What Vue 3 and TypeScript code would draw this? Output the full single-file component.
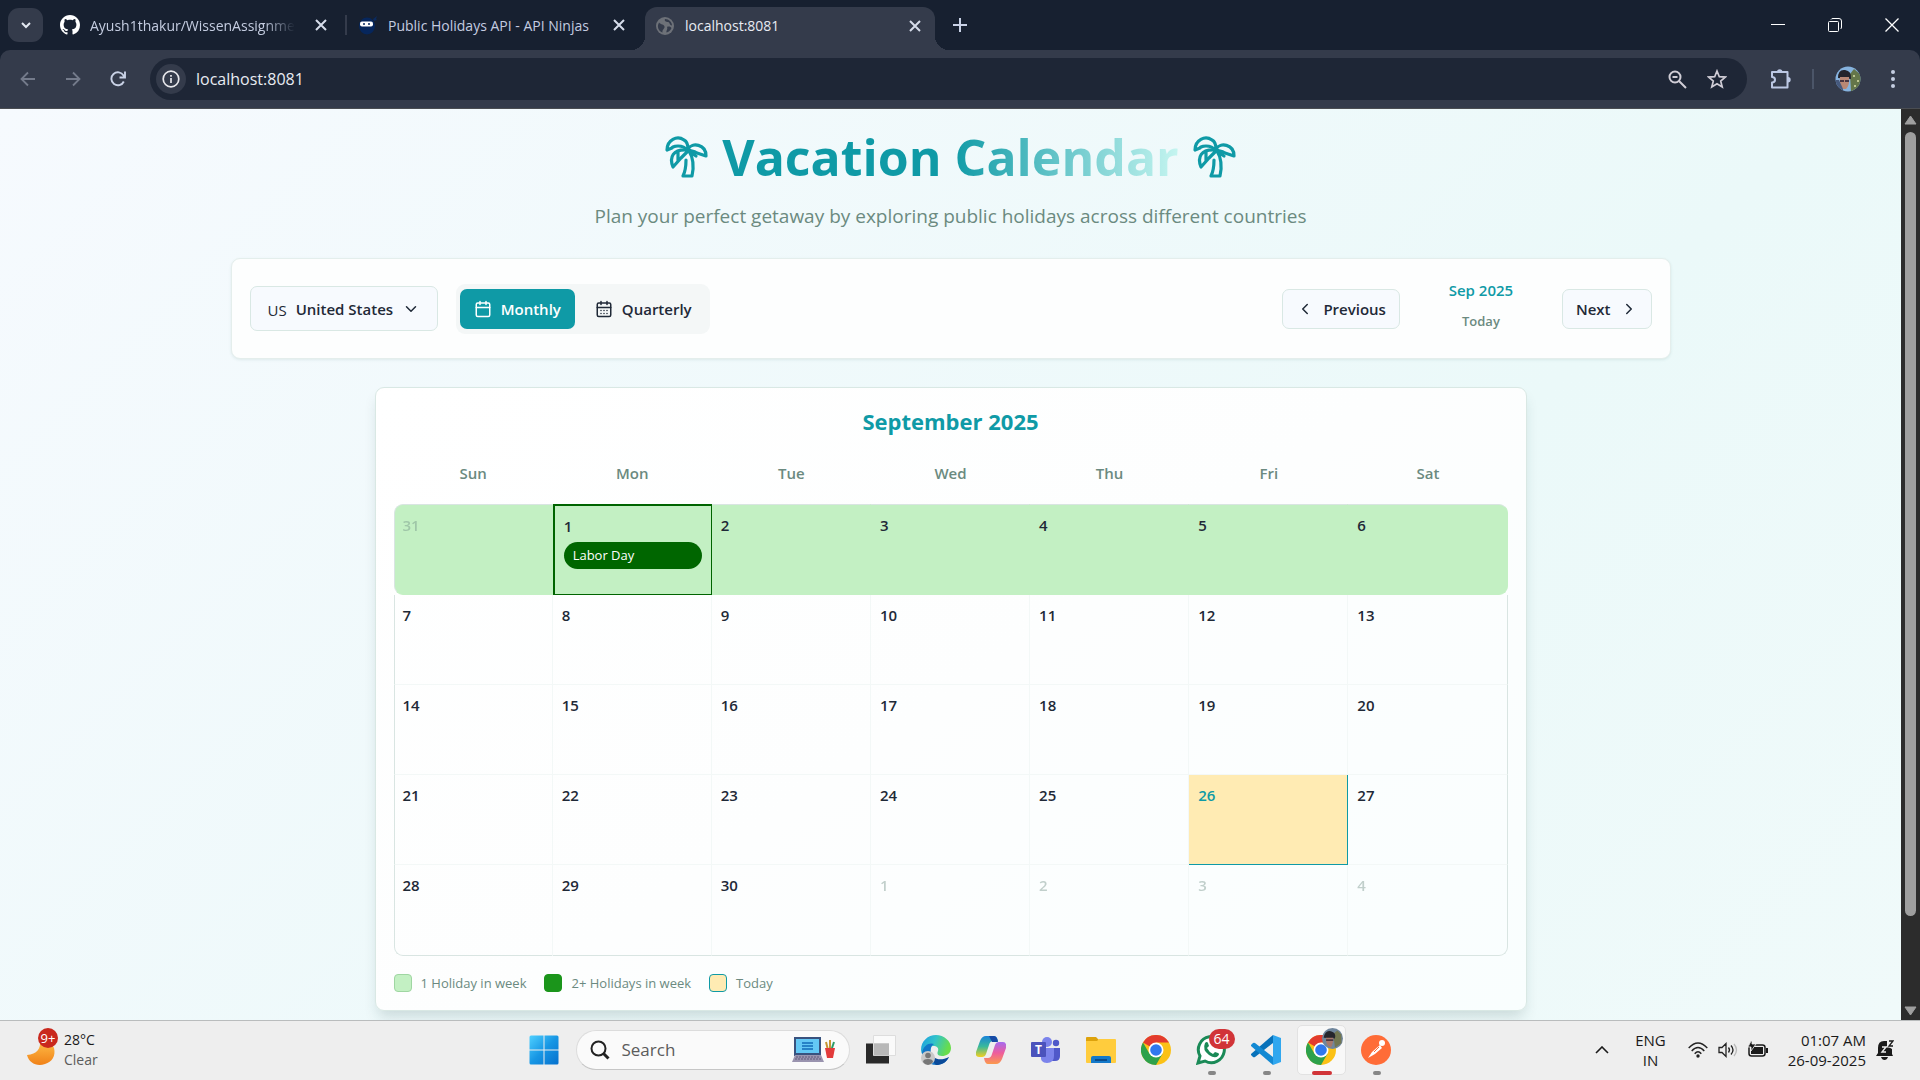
<script setup lang="ts">
interface Day {
  n: number
  muted?: boolean
  today?: boolean
  holiday?: string
}

const weekdays: string[] = ['Sun', 'Mon', 'Tue', 'Wed', 'Thu', 'Fri', 'Sat']

const weeks: Day[][] = Array.from({ length: 5 }, (_, w) =>
  Array.from({ length: 7 }, (_, d): Day => {
    const n = w * 7 + d
    if (n === 0) return { n: 31, muted: true }
    if (n > 30) return { n: n - 30, muted: true }
    return { n, today: n === 26, holiday: n === 1 ? 'Labor Day' : undefined }
  }),
)

const hasHoliday = (week: Day[]): boolean => week.some((d) => d.holiday)
</script>

<template>
  <div class="screen">
    <header class="browser">
      <div class="tabs">
        <button class="tab-search" aria-label="Search tabs">
          <svg width="12" height="12" viewBox="0 0 12 12"><path d="M2 4l4 4 4-4" fill="none" stroke="#e3e8f2" stroke-width="2" /></svg>
        </button>
        <div class="tab tab-first">
          <svg width="20" height="20" viewBox="0 0 16 16"><path fill="#fff" d="M8 0C3.58 0 0 3.58 0 8c0 3.54 2.29 6.53 5.47 7.59.4.07.55-.17.55-.38 0-.19-.01-.82-.01-1.49-2.01.37-2.53-.49-2.69-.94-.09-.23-.48-.94-.82-1.13-.28-.15-.68-.52-.01-.53.63-.01 1.08.58 1.23.82.72 1.21 1.87.87 2.33.66.07-.52.28-.87.51-1.07-1.78-.2-3.64-.89-3.64-3.95 0-.87.31-1.59.82-2.15-.08-.2-.36-1.02.08-2.12 0 0 .67-.21 2.2.82.64-.18 1.32-.27 2-.27s1.36.09 2 .27c1.53-1.04 2.2-.82 2.2-.82.44 1.1.16 1.92.08 2.12.51.56.82 1.27.82 2.15 0 3.07-1.87 3.75-3.65 3.95.29.25.54.73.54 1.48 0 1.07-.01 1.93-.01 2.2 0 .21.15.46.55.38A8.01 8.01 0 0 0 16 8c0-4.42-3.58-8-8-8z" /></svg>
          <span class="tab-title faded">Ayush1thakur/WissenAssignme</span>
          <button class="tab-close" aria-label="Close tab"><svg width="12" height="12" viewBox="0 0 12 12"><path d="M1 1l10 10M11 1L1 11" /></svg></button>
        </div>
        <span class="tab-sep"></span>
        <div class="tab tab-second">
          <svg width="20" height="20" viewBox="0 0 20 20"><path d="M15 4l4-3-1 3 1 1-3 1z" fill="#0b2a5e" /><ellipse cx="9" cy="11" rx="8" ry="8.500" fill="#06265c" /><rect x="2" y="6.500" width="13" height="5" rx="2" fill="#fff" /><circle cx="6" cy="9" r="1" fill="#06265c" /><circle cx="11" cy="9" r="1" fill="#06265c" /></svg>
          <span class="tab-title">Public Holidays API - API Ninjas</span>
          <button class="tab-close" aria-label="Close tab"><svg width="12" height="12" viewBox="0 0 12 12"><path d="M1 1l10 10M11 1L1 11" /></svg></button>
        </div>
        <div class="tab tab-active">
          <svg width="18" height="18" viewBox="0 0 18 18"><circle cx="9" cy="9" r="9" fill="#6d7178" /><path d="M3 5.500C5 8 8 7 8.500 9.500S6 12 6.500 15.500C3 14.500 1.500 11 2 8zM9 2c-1 2 1 3 3 3s1 3 4 3.500C16 5 13 2 9 2zM11 10c2-1 4 0 4.500 1-1 2.500-3 4-5 4.500-.5-2 1.500-3 .5-5.500z" fill="#343b4b" /></svg>
          <span class="tab-title">localhost:8081</span>
          <button class="tab-close" aria-label="Close tab"><svg width="12" height="12" viewBox="0 0 12 12"><path d="M1 1l10 10M11 1L1 11" /></svg></button>
        </div>
        <button class="new-tab" aria-label="New tab"><svg width="14" height="14" viewBox="0 0 14 14"><path d="M7 0v14M0 7h14" stroke="#c9d2e6" stroke-width="2" /></svg></button>
        <div class="window-buttons">
          <button aria-label="Minimize"><svg width="14" height="14" viewBox="0 0 14 14"><path d="M0 6.500h14" stroke="#fff" /></svg></button>
          <button aria-label="Restore"><svg width="14" height="14" viewBox="0 0 14 14"><g fill="none" stroke="#fff"><rect x=".5" y="3.500" width="10" height="10" rx="1" /><path d="M3 1.500Q3.500.5 5 .5h6q2.500 0 2.500 2.500v6q0 1.500-1 2" /></g></svg></button>
          <button aria-label="Close"><svg width="14" height="14" viewBox="0 0 14 14"><path d="M.5.5l13 13M13.500.5l-13 13" stroke="#fff" stroke-width="1.300" /></svg></button>
        </div>
      </div>

      <div class="toolbar">
        <button class="nav" aria-label="Back"><svg width="16" height="16" viewBox="0 0 16 16"><path d="M15 8H2M8 1.500L1.500 8 8 14.500" fill="none" stroke="#747b8b" stroke-width="1.800" /></svg></button>
        <button class="nav" aria-label="Forward"><svg width="16" height="16" viewBox="0 0 16 16"><path d="M1 8h13M8 1.500L14.500 8 8 14.500" fill="none" stroke="#747b8b" stroke-width="1.800" /></svg></button>
        <button class="nav" aria-label="Reload"><svg width="16" height="16" viewBox="0 0 16 16"><path d="M13.800 10.500A6.500 6.500 0 1 1 13.500 4.500L14.500 6M15 .5V6.500H9.500" fill="none" stroke="#c9d2e6" stroke-width="1.900" /></svg></button>
        <div class="omnibox">
          <button class="site-info" aria-label="Site information"><svg width="18" height="18" viewBox="0 0 18 18"><circle cx="9" cy="9" r="7.800" fill="none" stroke="#e8e8ec" stroke-width="1.700" /><path d="M9 8v5M9 5v1.700" stroke="#e8e8ec" stroke-width="1.700" /></svg></button>
          <input class="url" type="text" value="localhost:8081" aria-label="Address" />
          <button class="omni-btn" aria-label="Zoom"><svg width="19" height="19" viewBox="0 0 19 19"><g fill="none" stroke="#d0cdd6" stroke-width="2"><circle cx="7" cy="7" r="5.500" /><path d="M11 11l7 7M4.500 7h5" /></g></svg></button>
          <button class="omni-btn" aria-label="Bookmark"><svg width="20" height="20" viewBox="0 0 20 20"><path d="M10 2l2.300 5.700 6 .4-4.600 3.900 1.500 6L10 14.700 4.800 18l1.500-6L1.700 8.100l6-.4z" fill="none" stroke="#d0cdd6" stroke-width="1.700" /></svg></button>
        </div>
        <button class="tool" aria-label="Extensions"><svg width="22" height="22" viewBox="0 0 22 22"><path d="M2 4h15.500v15.500H2v-5c4 0 4-5.500 0-5.500z" fill="none" stroke="#bcc8e4" stroke-width="2" stroke-linejoin="round" /><path d="M7 4a2.700 2.700 0 0 1 5.400 0zM18 9a2.700 2.700 0 0 1 0 5.400z" fill="#bcc8e4" /></svg></button>
        <span class="tool-sep"></span>
        <button class="tool" aria-label="Profile"><svg width="26" height="26" viewBox="0 0 26 26"><defs><clipPath id="pf"><circle cx="13" cy="13" r="12.500" /></clipPath></defs><g clip-path="url(#pf)"><path fill="#86b3df" d="M0 0h26v26H0z" /><path fill="#64764a" d="M15 8l4-5 7 6v14l-10 3z" /><path fill="#bcc591" d="M18 9h2v2h-2zM22 14h2v2h-2zM19 19h2v2h-2z" /><path fill="#24242b" d="M3 12Q3 3 10 4q7 1 6 9z" /><path fill="#b98875" d="M5 11h9q1 8-3 12H8q-4-4-3-12z" /><path d="M5 15h4M10 15h4" stroke="#493642" stroke-width="2" /><path fill="#46597d" d="M0 14h4l4 9v3H0z" /></g></svg></button>
        <button class="tool" aria-label="Menu"><svg width="4" height="18" viewBox="0 0 4 18"><g fill="#c5cee2"><circle cx="2" cy="2" r="2" /><circle cx="2" cy="9" r="2" /><circle cx="2" cy="16" r="2" /></g></svg></button>
      </div>
    </header>

    <div class="viewport">
      <main class="page">
        <h1 class="title">
          <svg v-for="side in 2" :key="side" :class="side === 1 ? 'palm-left' : 'palm-right'" width="43" height="42" viewBox="0 0 43 42">
            <g fill="none" stroke="#0f9aa6" stroke-width="3.200" stroke-linejoin="round" stroke-linecap="round">
              <path d="M22 14C18 8 7 10 7 12L2 14C2 4 12-1 19 4c2 1 4 4 4 9C27 6 41 8 41 20l-9-3c-3-2-7-2-9-3" />
              <path d="M22 14C8 13 4 21 8 31l8-9 8-8M13 16v9" />
              <path d="M24 15l7 5M24 15c5 8 5 16 3 25H18c3-6 3-10 3-16" />
            </g>
          </svg>
          <span class="title-text">Vacation Calendar</span>
        </h1>
        <p class="subtitle">Plan your perfect getaway by exploring public holidays across different countries</p>

        <section class="controls">
          <label class="country">
            <span class="flag">US</span>
            <select aria-label="Country">
              <option>United States</option>
            </select>
            <svg width="18" height="18" viewBox="0 0 24 24" class="line"><path d="m6 9 6 6 6-6" /></svg>
          </label>
          <div class="views">
            <button class="btn primary">
              <svg width="18" height="18" viewBox="0 0 24 24" class="line"><path d="M8 2v4M16 2v4M3 10h18" /><rect x="3" y="4" width="18" height="18" rx="2" /></svg>
              Monthly
            </button>
            <button class="btn plain">
              <svg width="18" height="18" viewBox="0 0 24 24" class="line"><path d="M8 2v4M16 2v4M3 10h18M8 14h.01M12 14h.01M16 14h.01M8 18h.01M12 18h.01M16 18h.01" /><rect x="3" y="4" width="18" height="18" rx="2" /></svg>
              Quarterly
            </button>
          </div>
          <div class="pager">
            <button class="btn outline"><svg width="18" height="18" viewBox="0 0 24 24" class="line"><path d="m15 18-6-6 6-6" /></svg>Previous</button>
            <div class="current">
              <span class="period">Sep 2025</span>
              <button class="today-link">Today</button>
            </div>
            <button class="btn outline">Next<svg width="18" height="18" viewBox="0 0 24 24" class="line"><path d="m9 18 6-6-6-6" /></svg></button>
          </div>
        </section>

        <section class="calendar">
          <h2>September 2025</h2>
          <table>
            <thead>
              <tr>
                <th v-for="d in weekdays" :key="d" scope="col">{{ d }}</th>
              </tr>
            </thead>
            <tbody>
              <tr v-for="(week, w) in weeks" :key="w" :class="{ festive: hasHoliday(week) }">
                <td v-for="day in week" :key="day.n" :class="{ muted: day.muted, today: day.today, holiday: day.holiday }">
                  <div class="num">{{ day.n }}</div>
                  <div v-if="day.holiday" class="pill">{{ day.holiday }}</div>
                </td>
              </tr>
            </tbody>
          </table>
          <ul class="legend">
            <li><span class="swatch one"></span>1 Holiday in week</li>
            <li><span class="swatch many"></span>2+ Holidays in week</li>
            <li><span class="swatch now"></span>Today</li>
          </ul>
        </section>
      </main>
      <div class="scrollbar">
        <svg width="13" height="10" viewBox="0 0 13 10"><path d="M6.500 1L12 9H1z" fill="#9f9f9f" stroke="#9f9f9f" stroke-linejoin="round" /></svg>
        <span class="thumb"></span>
        <svg width="13" height="10" viewBox="0 0 13 10"><path d="M6.500 9L12 1H1z" fill="#9f9f9f" stroke="#9f9f9f" stroke-linejoin="round" /></svg>
      </div>
    </div>

    <footer class="taskbar">
      <button class="weather">
        <svg width="38" height="44" viewBox="0 -6 38 44">
          <defs><linearGradient id="mn" x1="0" y1="0" x2="0" y2="1"><stop offset="0" stop-color="#ffc04a" /><stop offset="1" stop-color="#f08118" /></linearGradient></defs>
          <path d="M15 6c1 9-3 14-13 15 2 8 10 12 18 9 7-2 11-8 9-16-3-7-8-9-14-8z" fill="url(#mn)" />
          <circle cx="23" cy="4" r="10" fill="#c9281d" />
          <text x="23" y="9" text-anchor="middle" font-size="13" fill="#fff">9+</text>
        </svg>
        <span class="weather-text"><span>28°C</span><span class="sky">Clear</span></span>
      </button>

      <div class="apps">
        <button class="app" aria-label="Start"><svg width="30" height="30" viewBox="0 0 30 30"><defs><linearGradient id="win" x1="0" y1="0" x2="1" y2="1"><stop offset="0" stop-color="#4fd0ff" /><stop offset=".5" stop-color="#1796e4" /><stop offset="1" stop-color="#0670cd" /></linearGradient></defs><path fill="url(#win)" d="M2 .5h12.500v14H.5V2q0-1.500 1.500-1.500zM15.500.5H28q1.500 0 1.500 1.500v12.500h-14zM.5 15.500h14v14H2Q.5 29.500.5 28zM15.500 15.500h14V28q0 1.500-1.500 1.500H15.500z" /></svg></button>
        <label class="search">
          <svg width="20" height="20" viewBox="0 0 20 20"><g fill="none" stroke="#222" stroke-width="2"><circle cx="8.500" cy="8.500" r="7" /><path d="M13.500 13.500l5 5" stroke-width="3" /></g></svg>
          <input type="text" placeholder="Search" aria-label="Search" />
          <svg width="44" height="28" viewBox="0 0 44 28"><path d="M2 1h27v19H2z" fill="#39527f" /><path d="M4 3h23v14H4z" fill="#64c8f5" /><path d="M10 7h11M10 10h11M10 13h11" stroke="#2783c8" stroke-width="2" /><path d="M3 19h26l3 7H0z" fill="#9a94af" /><path d="M4 21h24M3 23h26" stroke="#625b7c" stroke-dasharray="2 1" /><path d="M34 6l2 8M38 4v11" stroke="#c69532" stroke-width="2" /><path d="M42 6l-3 9" stroke="#2b9b66" stroke-width="2" /><path d="M33 12h10l-2 10h-6z" fill="#e23b3b" /></svg>
        </label>
        <button class="app" aria-label="Task view"><svg width="30" height="30" viewBox="0 0 30 30"><path fill="#292929" d="M0 8.500h23v20H0z" /><path fill="#fff" fill-opacity=".7" stroke="#ddd" d="M7.500.5h22v20h-22z" /><path fill="#b8b8b8" d="M8 8.500h15v12H8z" /></svg></button>
        <button class="app" aria-label="Edge"><svg width="30" height="30" viewBox="0 0 30 30"><defs><linearGradient id="ed" x1="0" y1="0" x2="1" y2=".3"><stop offset="0" stop-color="#1b9be2" /><stop offset=".5" stop-color="#32c3ca" /><stop offset="1" stop-color="#68dd4b" /></linearGradient></defs><path d="M0 15C0 6 7 0 15 0s15 6 15 13c0 6-5 8-9 8-5 0-5-3-4-5 1-3-1-5-5-5S3 14 2 20Q0 18 0 15z" fill="url(#ed)" /><path d="M1 18C2 10 9 7 13 9c-5 3-4 11 1 15s11 1 14-2c-3 6-8 8-13 8C8 30 2 25 1 18z" fill="#1276c7" /><path d="M11 17c0 8 9 9 17 5-3 6-8 8-13 8-4-4-5-8-4-13z" fill="#0a4a99" /><circle cx="7" cy="23" r="7" fill="#c9c9c9" /><circle cx="7" cy="20.500" r="2.800" fill="#777" /><path d="M2 27q0-3 5-3t5 3q-2 3-5 3t-5-3z" fill="#777" /></svg></button>
        <button class="app" aria-label="Copilot"><svg width="30" height="28" viewBox="0 0 30 28"><defs><linearGradient id="c1" x1="0" y1="0" x2="0" y2="1"><stop offset="0" stop-color="#1a83d9" /><stop offset=".5" stop-color="#39b99b" /><stop offset="1" stop-color="#f3cf20" /></linearGradient><linearGradient id="c2" x1="0" y1="0" x2="0" y2="1"><stop offset="0" stop-color="#a56bf0" /><stop offset=".5" stop-color="#ee5d9c" /><stop offset="1" stop-color="#fb9a4d" /></linearGradient></defs><path d="M10 0h8q3 0 4 5h-5q-3 0-4 4l-3 9q-1 3-4 3H3q-4 0-3-5l4-11q2-5 6-5z" fill="url(#c1)" /><path d="M20 28h-8q-3 0-4-6h4q3 0 4-4l3-9q1-3 4-3h4q4 0 3 6l-4 11q-2 5-6 5z" fill="url(#c2)" /><path d="M13 0h5q3 0 4 6h-6z" fill="#174aa5" /></svg></button>
        <button class="app" aria-label="Teams"><svg width="30" height="28" viewBox="0 0 30 28"><circle cx="16" cy="6" r="5" fill="#7b83eb" /><circle cx="25" cy="7" r="3.200" fill="#5059c9" /><path d="M20 12h9v8q0 5-5 5h-4z" fill="#5059c9" /><path d="M10 12h13v8q0 7-7 7t-6-7z" fill="#7b83eb" /><rect y="6" width="15" height="15" rx="1" fill="#4b53bc" /><text x="7.500" y="18" text-anchor="middle" font-size="12" font-weight="700" fill="#fff">T</text></svg></button>
        <button class="app" aria-label="File Explorer"><svg width="30" height="28" viewBox="0 0 30 28"><path d="M0 2q0-1 1-1h9l3 3h-1v4H0z" fill="#dda20c" /><path d="M0 5h11l2-2h16q1 0 1 1v22q0 1-1 1H1q-1 0-1-1z" fill="#ffcc3d" /><path d="M5 27v-5q0-2 2-2h16q2 0 2 2v5z" fill="#1479c9" /><path d="M9 24h12" stroke="#0a4c8c" stroke-width="2" /></svg></button>
        <button class="app" aria-label="Chrome"><svg width="30" height="30" viewBox="0 0 30 30"><circle cx="15" cy="15" r="15" fill="#fbc116" /><path d="M15 15L2 7.500A15 15 0 0 1 28 7.500H15z" fill="#e33b2e" /><path d="M2 7.500A15 15 0 0 0 15 30l6.500-11.300L15 15l-6.500 3.700z" fill="#2da14b" /><circle cx="15" cy="15" r="7.500" fill="#fff" /><circle cx="15" cy="15" r="5.800" fill="#2f78ee" /></svg></button>
        <button class="app" aria-label="WhatsApp">
          <svg width="30" height="30" viewBox="0 0 30 30"><path d="M2 28l2-7A13 13 0 1 1 9 26z" fill="#fff" stroke="#1a8a57" stroke-width="3" /><path d="M9 8q2-2 3 0l1 3-2 2q2 4 6 6l2-2 3 1q2 1 0 3-3 3-9-1-7-5-4-12z" fill="#1a8a57" /></svg>
          <span class="badge">64</span><span class="dot"></span>
        </button>
        <button class="app" aria-label="Visual Studio Code">
          <svg width="30" height="30" viewBox="0 0 30 30"><path d="M22 0l8 3v24l-8 3z" fill="#30a7ef" /><path d="M22 0v8L4 22q-1 .5-2 0l-2-2v-1z" fill="#0872ba" /><path d="M22 30v-8L4 8q-1-.5-2 0l-2 2v1z" fill="#1389d3" /></svg>
          <span class="dot"></span>
        </button>
        <button class="app current-app" aria-label="Chrome, active">
          <svg width="30" height="30" viewBox="0 0 30 30"><circle cx="15" cy="15" r="15" fill="#fbc116" /><path d="M15 15L2 7.500A15 15 0 0 1 28 7.500H15z" fill="#e33b2e" /><path d="M2 7.500A15 15 0 0 0 15 30l6.500-11.300L15 15l-6.500 3.700z" fill="#2da14b" /><circle cx="15" cy="15" r="7.500" fill="#fff" /><circle cx="15" cy="15" r="5.800" fill="#2f78ee" /></svg>
          <svg class="mini" width="21" height="21" viewBox="0 0 26 26"><circle cx="13" cy="13" r="13" fill="#70869c" /><path d="M14 7l5-4 5 5v11l-8 5z" fill="#727751" /><path d="M2 12Q4 2 11 4q7 2 5 9z" fill="#26262d" /><path d="M5 12h9q0 8-3 12-7-2-6-12z" fill="#a6796d" /><path d="M5 15h9" stroke="#45343d" stroke-width="2" /></svg>
          <span class="dot wide"></span>
        </button>
        <button class="app" aria-label="Postman">
          <svg width="30" height="30" viewBox="0 0 30 30"><circle cx="15" cy="15" r="15" fill="#ff6c37" /><circle cx="21" cy="8" r="3" fill="#fff" /><path d="M19 10l2 3-7 6-7 4 4-6z" fill="#fff" /><path d="M13 17l5-5" stroke="#ff6c37" /></svg>
          <span class="dot"></span>
        </button>
      </div>

      <div class="tray">
        <button aria-label="Show hidden icons"><svg width="14" height="8" viewBox="0 0 14 8"><path d="M1 7l6-6 6 6" fill="none" stroke="#1a1a1a" stroke-width="1.600" /></svg></button>
        <button class="lang"><span>ENG</span><span>IN</span></button>
        <button class="status" aria-label="Network, sound and battery">
          <svg width="20" height="16" viewBox="0 0 20 16"><g fill="none" stroke="#222" stroke-width="1.400"><path d="M.7 6q9.300-10 18.600 0M3.700 9q6.300-7 12.600 0M6.700 11.800q3.300-4 6.600 0" /></g><circle cx="10" cy="14" r="1.700" fill="#222" /></svg>
          <svg width="20" height="18" viewBox="0 0 20 18"><g fill="none" stroke="#222" stroke-width="1.300"><path d="M1 6.500h3l4-4v13l-4-4H1zM10.500 6.500q2 2.500 0 5M13 4.500q4 4.500 0 9" /><path d="M16 3q5 6 0 12" stroke="#bbb" /></g></svg>
          <svg width="20" height="18" viewBox="0 0 20 18"><rect x="1" y="4" width="16" height="11" rx="2.500" fill="none" stroke="#1a1a1a" stroke-width="1.500" /><path d="M3 6h12v7H3zM18 7h2v5h-2z" fill="#1a1a1a" /><path d="M3 0L0 6h3v4l5-7H4V0z" fill="#1a1a1a" stroke="#eee" stroke-width=".8" /></svg>
        </button>
        <button class="clock"><span>01:07 AM</span><span>26-09-2025</span></button>
        <button aria-label="Notifications"><svg width="18" height="20" viewBox="0 0 18 20"><path d="M2 8q0-7 6-7h3v5l5 3v5l1 2H0l2-3zM5 17h7q-1 3-3.500 3T5 17z" fill="#1a1a1a" /><path d="M6 7h4l-4 5h4" fill="none" stroke="#eee" stroke-width="1.400" /><path d="M13 1h4l-4 5h4" fill="none" stroke="#eee" stroke-width="3" /><path d="M13 1h4l-4 5h4" fill="none" stroke="#1a1a1a" stroke-width="1.300" /></svg></button>
      </div>
    </footer>
  </div>
</template>

<style>
body {
  margin: 0;
}
</style>

<style scoped>
.screen,
.screen * {
  box-sizing: border-box;
}
.screen {
  display: flex;
  flex-direction: column;
  min-height: 100vh;
  font-family: 'Open Sans', 'Noto Sans', sans-serif;
  color: #1f2937;
}
button,
input,
select {
  font: inherit;
  color: inherit;
  border: 0;
  padding: 0;
  margin: 0;
  background: none;
}
button {
  display: flex;
  align-items: center;
  justify-content: center;
  flex: none;
}
svg {
  flex: none;
  display: block;
}
.line {
  fill: none;
  stroke: currentColor;
  stroke-width: 2;
  stroke-linecap: round;
  stroke-linejoin: round;
}

/* Browser chrome */
.browser {
  background: #172030;
}
.tabs {
  display: flex;
  align-items: center;
  height: 50px;
  padding-left: 8px;
  font-size: 14px;
  color: #c4cce0;
}
.tab-search {
  width: 35px;
  height: 34px;
  border-radius: 11px;
  background: #343b4b;
}
.tab {
  display: flex;
  align-items: center;
  height: 43px;
}
.tab-first {
  width: 285px;
  margin-left: 17px;
  gap: 10px;
}
.tab-second {
  width: 280px;
  padding-left: 11px;
  gap: 10px;
}
.tab-active {
  position: relative;
  align-self: flex-end;
  width: 290px;
  margin-left: 18px;
  padding: 0 12px 6px 11px;
  gap: 11px;
  background: #343b4b;
  border-radius: 12px 12px 0 0;
  color: #e8ebf2;
}
.tab-active::before,
.tab-active::after {
  content: '';
  position: absolute;
  bottom: 0;
  width: 14px;
  height: 14px;
}
.tab-active::before {
  right: 100%;
  background: radial-gradient(circle at 0 0, #172030 14px, #343b4b 14px);
}
.tab-active::after {
  left: 100%;
  background: radial-gradient(circle at 100% 0, #172030 14px, #343b4b 14px);
}
.tab-title {
  flex: 1;
  white-space: nowrap;
}
.faded {
  flex: none;
  mask-image: linear-gradient(90deg, #000 85%, transparent);
}
.tab-close {
  margin-left: auto;
  margin-right: 2px;
  stroke: #d6dcea;
  stroke-width: 2;
}
.tab-first .tab-close {
  margin-right: 18px;
}
.tab-sep {
  width: 2px;
  height: 20px;
  background: #343b4b;
}
.new-tab {
  margin-left: 18px;
}
.window-buttons {
  display: flex;
  margin-left: auto;
}
.window-buttons button {
  width: 57px;
  height: 48px;
}
.toolbar {
  display: flex;
  align-items: center;
  height: 59px;
  padding: 0 23px 0 20px;
  background: #343b4b;
  border-bottom: 1px solid #4a4d52;
  border-radius: 10px 10px 0 0;
}
.nav {
  width: 16px;
  margin-right: 29px;
}
.omnibox {
  display: flex;
  align-items: center;
  flex: 1;
  height: 42px;
  margin-left: -5px;
  margin-right: 23px;
  padding: 0 20px 0 6px;
  gap: 20px;
  border-radius: 21px;
  background: #1e2636;
}
.site-info {
  width: 30px;
  height: 30px;
  margin-right: -10px;
  border-radius: 15px;
  background: #343b4b;
}
.url {
  flex: 1;
  min-width: 0;
  font-size: 16px;
  color: #e8ebf2;
}
.tool-sep {
  width: 2px;
  height: 20px;
  margin: 0 21px 0 20px;
  background: #4b5568;
}
.tool + .tool {
  width: 8px;
  margin-left: 28px;
}

/* Page */
.viewport {
  display: flex;
  flex: 1;
}
.page {
  flex: 1;
  min-width: 0;
  padding: 18px 18px 8px;
  background: linear-gradient(135deg, #f6fafe 0%, #ebf9f9 65%, #f0fafa 100%);
}
.title {
  display: flex;
  justify-content: center;
  align-items: center;
  gap: 14px;
  margin: 0;
  font-size: 50px;
  line-height: 60px;
  font-weight: 700;
}
.palm-left {
  order: 0;
}
.title-text {
  order: 1;
  color: transparent;
  background: linear-gradient(90deg, #0f9aa6 50%, #c5f5f0);
  background-clip: text;
}
.palm-right {
  order: 2;
}
.subtitle {
  margin: 15px 0 28px;
  text-align: center;
  font-size: 19px;
  line-height: 28px;
  color: #6b8a80;
}
.controls {
  display: flex;
  align-items: center;
  max-width: 1440px;
  height: 101px;
  margin: 0 auto 28px;
  padding: 0 18px;
  border: 1px solid #e4eeec;
  border-radius: 9px;
  background: #fdfefe;
  box-shadow: 0 1px 3px rgba(40, 100, 90, 0.1);
  font-size: 15px;
  font-weight: 600;
}
.country {
  display: flex;
  align-items: center;
  height: 45px;
  padding: 0 17px;
  border: 1px solid #d9e8e4;
  border-radius: 7px;
  background: #f7fafe;
}
.country select {
  appearance: none;
  margin: 0 8px 0 9px;
}
.flag {
  font-weight: 400;
  padding-top: 3px;
}
.views {
  display: flex;
  gap: 6px;
  margin-left: 18px;
  padding: 5px 4px;
  border-radius: 9px;
  background: #f4f7f7;
}
.btn {
  height: 40px;
  padding: 0 14px;
  gap: 9px;
  border-radius: 7px;
}
.primary {
  background: #0f9aa6;
  color: #fff;
}
.outline {
  padding: 0 13px;
  border: 1px solid #d9e8e4;
  background: #f7fafe;
}
.pager {
  display: flex;
  align-items: center;
  gap: 18px;
  margin-left: auto;
}
.current {
  display: flex;
  flex-direction: column;
  align-items: center;
  min-width: 126px;
  padding-bottom: 9px;
  gap: 9px;
  line-height: 24px;
}
.period {
  color: #0f9aa6;
}
.today-link {
  font-size: 13px;
  line-height: 20px;
  color: #6b8a80;
}
.calendar {
  max-width: 1152px;
  margin: 0 auto;
  padding: 18px;
  border: 1px solid #d9e8e4;
  border-radius: 9px;
  background: linear-gradient(145deg, #fff, #fdfefe 50%, #f9fefe);
  box-shadow: 0 9px 14px -3px rgba(30, 70, 70, 0.17);
}
.calendar h2 {
  margin: 0 0 6px;
  text-align: center;
  font-size: 22px;
  line-height: 30px;
  font-weight: 700;
  color: #0f9aa6;
}
table {
  width: 100%;
  table-layout: fixed;
  border-collapse: separate;
  border-spacing: 0;
}
th {
  height: 62px;
  padding: 0;
  font-size: 15px;
  font-weight: 600;
  color: #6b8a80;
}
td {
  height: 90px;
  padding: 9px;
  vertical-align: top;
  font-size: 15px;
  font-weight: 600;
  border: solid #f3f8f7;
  border-width: 0 1px 1px 0;
}
td:first-child {
  padding-left: 8px;
  border-left: 1px solid #d9e5e2;
}
td:last-child {
  border-right-color: #d9e5e2;
}
tbody tr:first-child td {
  height: 91px;
  border-top: 1px solid #d9e5e2;
}
tbody tr:last-child td {
  height: 91px;
  border-bottom-color: #d9e5e2;
}
tbody tr:last-child td:first-child {
  border-bottom-left-radius: 9px;
}
tbody tr:last-child td:last-child {
  border-bottom-right-radius: 9px;
}
.festive td {
  background: #c3f0c3;
  border-right-color: #c3f0c3;
  border-bottom-color: #c3f0c3;
}
.festive td:first-child {
  border-radius: 9px 0 0 9px;
}
.festive td:last-child {
  border-radius: 0 9px 9px 0;
}
tbody .festive:first-child td.holiday {
  border: solid #006400;
  border-width: 2px 1px 1px 2px;
}
.num {
  line-height: 22px;
}
.muted .num {
  color: #6b8a80;
  opacity: 0.4;
}
td.today {
  background: #ffebb3;
  border-color: #0f9aa6;
  color: #0f9aa6;
}
.pill {
  margin-top: 5px;
  padding: 0 9px;
  border-radius: 14px;
  background: #006600;
  color: #fff;
  font-size: 13px;
  line-height: 27px;
  font-weight: 400;
}
.legend {
  display: flex;
  gap: 18px;
  margin: 18px 0 0;
  padding: 0;
  list-style: none;
  font-size: 13px;
  line-height: 18px;
  color: #6b8a80;
}
.legend li {
  display: flex;
  align-items: center;
  gap: 9px;
}
.swatch {
  width: 18px;
  height: 18px;
  border: 1px solid;
  border-radius: 4px;
}
.one {
  background: #c3f0c3;
  border-color: #9fd6a2;
}
.many {
  background: #1b951b;
  border-color: #1b951b;
}
.now {
  background: #ffebb3;
  border-color: #0f9aa6;
}
.scrollbar {
  display: flex;
  flex-direction: column;
  align-items: center;
  justify-content: space-between;
  width: 19px;
  padding: 6px 0 4px;
  background: #2c2c2c;
}
.thumb {
  flex: 1;
  width: 11px;
  margin: 7px 0 90px;
  border-radius: 6px;
  background: #9f9f9f;
}

/* Taskbar */
.taskbar {
  display: grid;
  grid-template-columns: 1fr auto 1fr;
  align-items: center;
  height: 60px;
  padding-bottom: 2px;
  background: #eee;
  border-top: 1px solid #b9bcbd;
  font-size: 14px;
  line-height: 20px;
  color: #1a1a1a;
}
.weather {
  justify-self: start;
  margin-left: 25px;
  gap: 1px;
}
.weather-text {
  display: flex;
  flex-direction: column;
  align-items: flex-start;
}
.sky {
  color: #5c5c5c;
}
.apps {
  display: flex;
  align-items: center;
}
.app {
  position: relative;
  width: 55px;
  height: 50px;
}
.search {
  display: flex;
  align-items: center;
  width: 274px;
  height: 40px;
  margin: 0 4px;
  padding: 0 13px;
  gap: 12px;
  border: 1px solid #dcdcdc;
  border-bottom-color: #c6c6c6;
  border-radius: 20px;
  background: #fafafa;
}
.search input {
  flex: 1;
  min-width: 0;
  font-size: 17px;
}
.search input::placeholder {
  color: #5c5c5c;
  opacity: 1;
}
.badge {
  position: absolute;
  top: 4px;
  right: 4px;
  width: 26px;
  height: 20px;
  border-radius: 10px;
  background: #d13438;
  color: #fff;
  font-size: 14px;
}
.dot {
  position: absolute;
  bottom: 0;
  left: 24px;
  width: 8px;
  height: 4px;
  border-radius: 2px;
  background: #868686;
}
.wide {
  left: 18px;
  width: 20px;
  background: #d13438;
}
.current-app::before {
  content: '';
  position: absolute;
  inset: 0 3px 0 3px;
  border: 1px solid #e2e2e2;
  border-radius: 5px;
  background: #f8f8f8;
}
.current-app svg {
  position: relative;
}
.current-app .mini {
  position: absolute;
  top: 3px;
  right: 6px;
}
.tray {
  display: flex;
  align-items: center;
  justify-self: end;
  margin-right: 26px;
}
.lang,
.clock {
  flex-direction: column;
  font-size: 15px;
}
.lang {
  margin-left: 26px;
}
.status {
  gap: 10px;
  margin: 0 20px 0 22px;
}
.clock {
  align-items: flex-end;
  margin-right: 10px;
}
</style>
